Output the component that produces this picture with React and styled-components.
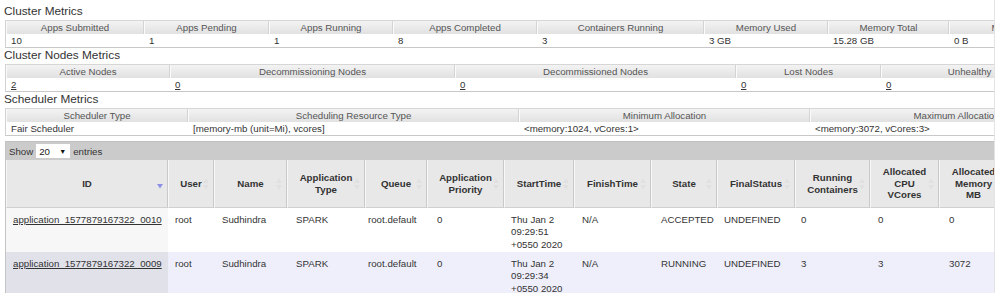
import React from 'react';
import styled, { createGlobalStyle } from 'styled-components';

const GlobalStyle = createGlobalStyle`
  html, body {
    margin: 0;
    padding: 0;
    background: #fff;
    overflow: hidden;
  }
  body {
    font-family: "Liberation Sans", Arial, sans-serif;
    font-size: 9.7px;
    color: #333;
  }
`;

const clusterMetrics = [
  { label: 'Apps Submitted', value: '10', w: 138 },
  { label: 'Apps Pending', value: '1', w: 125 },
  { label: 'Apps Running', value: '1', w: 124 },
  { label: 'Apps Completed', value: '8', w: 144 },
  { label: 'Containers Running', value: '3', w: 167 },
  { label: 'Memory Used', value: '3 GB', w: 124 },
  { label: 'Memory Total', value: '15.28 GB', w: 121 },
  { label: 'Memory Reserved', value: '0 B', w: 164 },
];

const nodeMetrics = [
  { label: 'Active Nodes', value: '2', w: 164, link: true },
  { label: 'Decommissioning Nodes', value: '0', w: 285, link: true },
  { label: 'Decommissioned Nodes', value: '0', w: 281, link: true },
  { label: 'Lost Nodes', value: '0', w: 145, link: true },
  { label: 'Unhealthy Nodes', value: '0', w: 208, link: true },
];

const schedulerMetrics = [
  { label: 'Scheduler Type', value: 'Fair Scheduler', w: 182 },
  { label: 'Scheduling Resource Type', value: '[memory-mb (unit=Mi), vcores]', w: 331 },
  { label: 'Minimum Allocation', value: '<memory:1024, vCores:1>', w: 291 },
  { label: 'Maximum Allocation', value: '<memory:3072, vCores:3>', w: 293 },
];

const appColumns = [
  { label: 'ID', head: 162, body: 162, sorted: true },
  { label: 'User', head: 46, body: 47 },
  { label: 'Name', head: 73, body: 74 },
  { label: 'Application Type', head: 78, body: 72 },
  { label: 'Queue', head: 62, body: 69 },
  { label: 'Application Priority', head: 77, body: 74 },
  { label: 'StartTime', head: 70, body: 71 },
  { label: 'FinishTime', head: 77, body: 79 },
  { label: 'State', head: 66, body: 63 },
  { label: 'FinalStatus', head: 78, body: 77 },
  { label: 'Running Containers', head: 75, body: 77 },
  { label: 'Allocated CPU VCores', head: 69, body: 71 },
  { label: 'Allocated Memory MB', head: 69, body: 67 },
];

const apps = [
  {
    id: 'application_1577879167322_0010',
    user: 'root',
    name: 'Sudhindra',
    type: 'SPARK',
    queue: 'root.default',
    priority: '0',
    start: ['Thu Jan 2', '09:29:51', '+0550 2020'],
    finish: 'N/A',
    state: 'ACCEPTED',
    status: 'UNDEFINED',
    containers: '0',
    vcores: '0',
    memory: '0',
  },
  {
    id: 'application_1577879167322_0009',
    user: 'root',
    name: 'Sudhindra',
    type: 'SPARK',
    queue: 'root.default',
    priority: '0',
    start: ['Thu Jan 2', '09:29:34', '+0550 2020'],
    finish: 'N/A',
    state: 'RUNNING',
    status: 'UNDEFINED',
    containers: '3',
    vcores: '3',
    memory: '3072',
  },
];

const sum = (list, key) => list.reduce((t, c) => t + c[key], 0);

export default function App() {
  return (
    <>
      <GlobalStyle />
      <Page>
        <Title>Cluster Metrics</Title>
        <MetricsBlock metrics={clusterMetrics} />
        <Title>Cluster Nodes Metrics</Title>
        <MetricsBlock metrics={nodeMetrics} />
        <Title>Scheduler Metrics</Title>
        <MetricsBlock metrics={schedulerMetrics} />

        <AppsWrapper>
          <Toolbar>
            Show
            <SelectBox>
              <span>20</span>
              <Arrow>▼</Arrow>
            </SelectBox>
            entries
          </Toolbar>

          <HeadTable $w={sum(appColumns, 'head')}>
            <colgroup>
              {appColumns.map((c) => (
                <Col key={c.label} $w={c.head} />
              ))}
            </colgroup>
            <thead>
              <tr>
                {appColumns.map((c) => (
                  <HeadCell key={c.label}>
                    {c.label}
                    <SortIcon sorted={c.sorted} />
                  </HeadCell>
                ))}
              </tr>
            </thead>
          </HeadTable>

          <BodyTable $w={sum(appColumns, 'body')}>
            <colgroup>
              {appColumns.map((c) => (
                <Col key={c.label} $w={c.body} />
              ))}
            </colgroup>
            <tbody>
              {apps.map((a, i) => (
                <AppRow key={a.id} $even={i % 2 === 1}>
                  <BodyCell>
                    <RowLink href="#">{a.id}</RowLink>
                  </BodyCell>
                  <BodyCell>{a.user}</BodyCell>
                  <BodyCell>{a.name}</BodyCell>
                  <BodyCell>{a.type}</BodyCell>
                  <BodyCell>{a.queue}</BodyCell>
                  <BodyCell>{a.priority}</BodyCell>
                  <BodyCell>
                    {a.start.map((s) => (
                      <Line key={s}>{s}</Line>
                    ))}
                  </BodyCell>
                  <BodyCell>{a.finish}</BodyCell>
                  <BodyCell>{a.state}</BodyCell>
                  <BodyCell>{a.status}</BodyCell>
                  <BodyCell>{a.containers}</BodyCell>
                  <BodyCell>{a.vcores}</BodyCell>
                  <BodyCell>{a.memory}</BodyCell>
                </AppRow>
              ))}
            </tbody>
          </BodyTable>
        </AppsWrapper>
      </Page>
    </>
  );
}

function MetricsBlock({ metrics }) {
  return (
    <MetricsTable $w={sum(metrics, 'w')}>
      <colgroup>
        {metrics.map((m) => (
          <Col key={m.label} $w={m.w} />
        ))}
      </colgroup>
      <thead>
        <tr>
          {metrics.map((m) => (
            <MetricHead key={m.label}>{m.label}</MetricHead>
          ))}
        </tr>
      </thead>
      <tbody>
        <tr>
          {metrics.map((m) => (
            <MetricCell key={m.label}>
              {m.link ? <RowLink href="#">{m.value}</RowLink> : m.value}
            </MetricCell>
          ))}
        </tr>
      </tbody>
    </MetricsTable>
  );
}

function SortIcon({ sorted }) {
  if (sorted) {
    return (
      <IconBox $sorted>
        <svg width="6" height="5" viewBox="0 0 6 5">
          <path d="M0 0 L6 0 L3 4.5 Z" fill="#8f8fe8" />
        </svg>
      </IconBox>
    );
  }
  return (
    <IconBox>
      <svg width="6" height="11" viewBox="0 0 6 11">
        <path d="M3 0 L6 4.5 L0 4.5 Z" fill="#e0e0e0" />
        <path d="M0 6.5 L6 6.5 L3 11 Z" fill="#e0e0e0" />
      </svg>
    </IconBox>
  );
}

const Page = styled.div`
  width: 995px;
  height: 293px;
  box-sizing: border-box;
  padding: 4px 0 0 5px;
  overflow: hidden;
  border-right: 1px solid #e4e4e4;
`;

const Title = styled.h3`
  margin: 0 0 2px -1px;
  font-size: 11.8px;
  line-height: 14px;
  font-weight: normal;
  color: #333;
`;

const Col = styled.col`
  width: ${(p) => p.$w}px;
`;

const MetricsTable = styled.table`
  width: ${(p) => p.$w}px;
  table-layout: fixed;
  border-collapse: separate;
  border-spacing: 0;
  border-left: 1px solid #d2d2d2;
  border-top: 1px solid #d6d6d6;
`;

const MetricHead = styled.th`
  height: 13px;
  padding: 0 4px;
  font-weight: normal;
  line-height: 13px;
  text-align: center;
  white-space: nowrap;
  overflow: hidden;
  color: #555;
  background: linear-gradient(#f3f3f3, #e1e1e1);
  border-left: 1px solid #fbfbfb;
  border-right: 1px solid #d4d4d4;
`;

const MetricCell = styled.td`
  height: 13px;
  padding: 0 5px;
  line-height: 13px;
  white-space: nowrap;
  overflow: hidden;
  background: #fff;
  border-bottom: 1px solid #c8c8c8;
`;

const RowLink = styled.a`
  color: #333;
  text-decoration: underline;
`;

const AppsWrapper = styled.div`
  margin-top: 5px;
  border-left: 1px solid #c4c4c4;
`;

const Toolbar = styled.div`
  display: flex;
  align-items: center;
  gap: 3px;
  height: 18px;
  padding-left: 3px;
  background: #cbcbcb;
  border-top: 1px solid #c0c0c0;
  color: #333;
`;

const SelectBox = styled.div`
  display: inline-flex;
  align-items: center;
  justify-content: space-between;
  box-sizing: border-box;
  width: 34px;
  height: 14px;
  padding: 0 4px 0 3px;
  background: #fff;
  color: #222;
`;

const Arrow = styled.span`
  font-size: 7px;
  color: #111;
`;

const HeadTable = styled.table`
  width: ${(p) => p.$w}px;
  table-layout: fixed;
  border-collapse: separate;
  border-spacing: 0;
`;

const HeadCell = styled.th`
  position: relative;
  height: 35px;
  padding: 6px 11px;
  font-weight: bold;
  line-height: 11.7px;
  text-align: center;
  vertical-align: middle;
  color: #333;
  background: #e8e8e8;
  border-left: 1px solid #f7f7f7;
  border-right: 1px solid #c9c9c9;
  border-bottom: 1px solid #d0d0d0;
`;

const IconBox = styled.span`
  position: absolute;
  right: 4px;
  top: 50%;
  transform: translateY(${(p) => (p.$sorted ? '0' : '-50%')});
  display: flex;
  line-height: 0;
`;

const BodyTable = styled.table`
  width: ${(p) => p.$w}px;
  table-layout: fixed;
  border-collapse: separate;
  border-spacing: 0;
`;

const AppRow = styled.tr`
  background: ${(p) => (p.$even ? '#efeffb' : '#fff')};

  & > td:first-child {
    background: ${(p) => (p.$even ? '#e1e1ea' : '#f7f7f7')};
  }
`;

const BodyCell = styled.td`
  height: 37px;
  padding: 6px 7px 1px;
  line-height: 12.3px;
  vertical-align: top;
  white-space: nowrap;
  color: #333;
`;

const Line = styled.div`
  height: 12.3px;
`;
